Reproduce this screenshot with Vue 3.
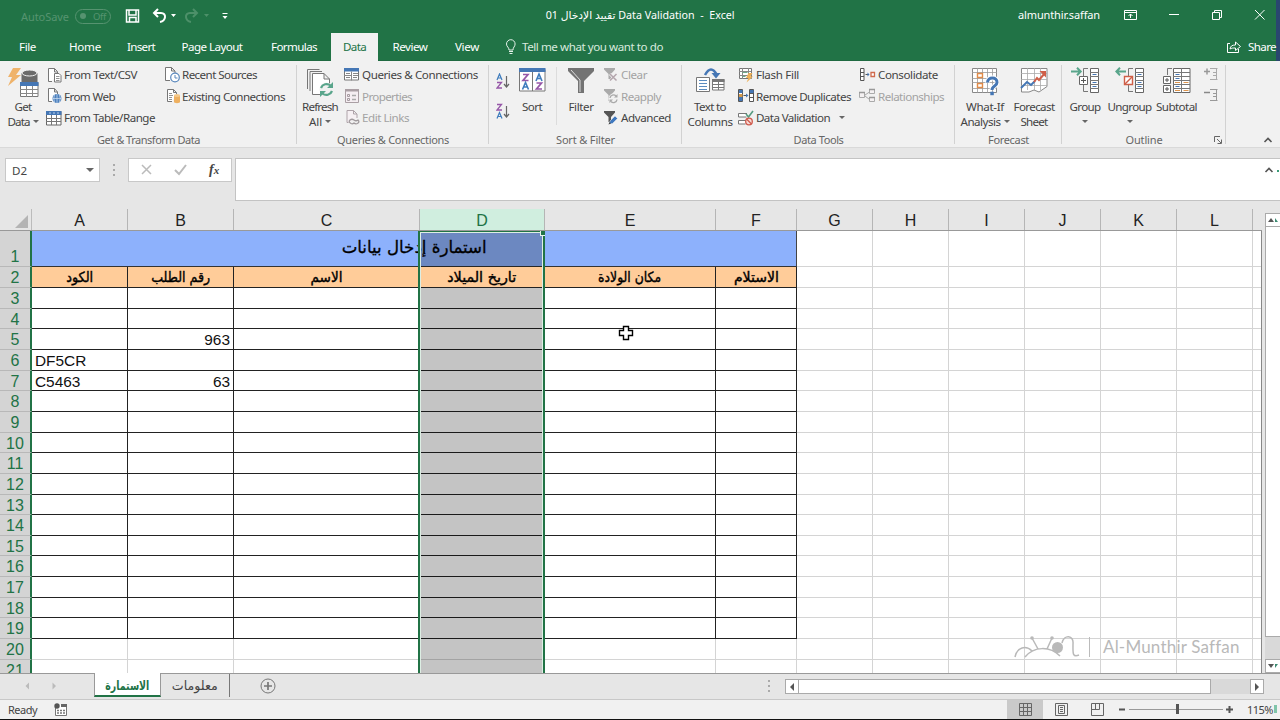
<script setup>
import { h } from 'vue'

const icons = {
  getData: [32, 32, '<path d="M15 6v18c0 3 16 3 16 0V6z" fill="#6b6b6b" transform="translate(-0.500 0)"/><ellipse cx="22.500" cy="6" rx="7.500" ry="3" fill="#6b6b6b" stroke="#f1f1f1"/><path d="M6 1h8l-5 7h5L1 19l4-9H1z" fill="#efb36b"/><path d="M13.500 15.500h17.500v14H13.500z" fill="#fff" stroke="#777"/><path d="M13 15h18.500v4H13z" fill="#4577b5"/><path d="M13 22.500h18M13 26.500h18M19.500 19v11M25.500 19v11" stroke="#888"/>'],
  textCsv: [16, 16, '<path d="M6 14.500H2.500V1.500h6l3 3V6M8.500 1.500v3.500h3" fill="#fff" stroke="#777"/><path d="M8.500 6.500h4.500l2 2v6.500H8.500z" fill="#fff" stroke="#777"/><path d="M10 9.500h3.500M10 11.500h3.500M10 13.500h3.500" stroke="#777" stroke-width=".8"/>'],
  web: [16, 16, '<path d="M6 13.500H2.500V.5h6l3 3.500V6M8.500 .5v3.500h3" fill="#fff" stroke="#777"/><circle cx="11" cy="10.500" r="4.500" fill="#4c80bd"/><path d="M6.500 10.500h9M11 6v9M8.500 7q-1.500 3.500 0 7M13.500 7q1.500 3.500 0 7" stroke="#d3e3f5" fill="none" stroke-width=".7"/>'],
  table: [16, 16, '<path d="M.5 1.500h14.500v13.500H.5z" fill="#fff" stroke="#666"/><path d="M0 1h15.500v4H0z" fill="#4577b5"/><path d="M0 8.500h15M0 11.500h15M5.500 5v10M10.500 5v10" stroke="#777"/><path d="M3 3h2M7 3h2M11 3h2" stroke="#b9d0ea"/>'],
  recent: [16, 16, '<path d="M6 13.500H1.500V.5h6l3.500 3.500V6M7.500 .5v3.500h3.500" fill="#fff" stroke="#777"/><circle cx="11" cy="10.500" r="4.300" fill="#fff" stroke="#5a88bd" stroke-width="1.200"/><path d="M11 8v3h2.500" fill="none" stroke="#5a88bd"/>'],
  existing: [16, 16, '<path d="M8 13.500H3.500V1.500h6l3 3V6M9.500 1.500v3h3" fill="#fff" stroke="#777"/><path d="M5 5.500h3M5 7.500h4M5 9.500h3M5 11.500h3" stroke="#777" stroke-width=".8"/><path d="M10 8v6c0 1.500 6 1.500 6 0V8z" fill="#eeb060"/><ellipse cx="13" cy="7.500" rx="3" ry="1.500" fill="#f4c788"/>'],
  refresh: [30, 32, '<path d="M2.500 22V2.500h12M5 24V4.500h12" fill="none" stroke="#777"/><path d="M7.500 27.500V6.500h11.500l5.500 5.500v15.500zM19 6.500v5.500h5.500" fill="#fff" stroke="#777"/><circle cx="21.500" cy="22.500" r="7" fill="#f1f1f1"/><path d="M16 21a6 6 0 0 1 9.500-2.500M27 24a6 6 0 0 1-9.500 2.500" fill="none" stroke="#59a58b" stroke-width="2.200"/><path d="M28 15v6h-6zM15 30v-6h6z" fill="#59a58b"/>'],
  queries: [16, 16, '<path d="M.5 1.500h14v11.500H.5z" fill="#fff" stroke="#777"/><path d="M0 1h15v3.500H0z" fill="#4577b5"/><path d="M0 8.500h7M7.500 4.500v9M9 6.500h5M9 8.500h5M9 10.500h4M2 6.500h4M2 10.500h4" stroke="#888"/>'],
  props: [16, 16, '<path d="M1.500 1.500h13v13h-13z" fill="#f5eef2" stroke="#aa9fa4"/><path d="M1 1h14v2.500H1z" fill="#aa9fa4"/><path d="M3.500 6.500h2v2h-2zM3.500 10.500h2v2h-2z" fill="none" stroke="#a59ba0"/><path d="M8 7.500h4M8 11.500h4" stroke="#aaa" stroke-width="1.300"/>'],
  links: [16, 16, '<path d="M4.500 12.500H3V.5h6.500l3.500 3.500V8M9.500 .5v3.500h3.500" fill="#f6f0f3" stroke="#aea3a9"/><path d="M7 13.500q-3-1.500-1-3.500 2-1.500 4 0t4 0q2 2-.5 3.500-2 .8-3.500-.500-1.500 1.300-3 .5" fill="none" stroke="#a09a9d" stroke-width="1.300"/>'],
  sort: [28, 26, '<path d="M1.500 2.500h25.500v21.500H1.500z" fill="#fff" stroke="#777"/><path d="M1 1h26.500v4H1z" fill="#4577b5"/><path d="M14.500 5v19" stroke="#777"/><path d="M5 7.500h5l-5 6h5.500M18.500 16h5l-5 6h5.500" fill="none" stroke="#9657a8" stroke-width="1.700"/><path d="M4.500 22.500l3-7 3 7M5.500 20h4M18 14l3-7 3 7M19 11.500h4" fill="none" stroke="#3e7cbd" stroke-width="1.600"/>'],
  az: [14, 17, '<path d="M1 7l2.500-6L6 7M2 5h3" fill="none" stroke="#3e7cbd" stroke-width="1.200"/><path d="M1 9.500h4.500L1 15h5" fill="none" stroke="#9657a8" stroke-width="1.300"/><path d="M10.500 3v11M8 11l2.500 3 2.500-3" fill="none" stroke="#666" stroke-width="1.200"/>'],
  za: [14, 17, '<path d="M1 1.500h4.500L1 7h5" fill="none" stroke="#9657a8" stroke-width="1.300"/><path d="M1 15.500l2.500-6 2.500 6M2 13.500h3" fill="none" stroke="#3e7cbd" stroke-width="1.200"/><path d="M10.500 3v11M8 11l2.500 3 2.500-3" fill="none" stroke="#666" stroke-width="1.200"/>'],
  filter: [28, 28, '<path d="M1 1h26v3L17 14v12h-6V14L1 4z" fill="#737373"/><path d="M4 3l9 10v12" fill="none" stroke="#ddd"/>'],
  clear: [16, 16, '<path d="M1 1h11v1.500L8 7v5H5.500V7L1 2.500z" fill="#aaa"/><path d="M7 7l7 7M14 7l-7 7" stroke="#f1f1f1" stroke-width="3"/><path d="M7 7l6.500 6.500M13.500 7L7 13.500" stroke="#b3a5ac" stroke-width="1.500"/>'],
  reapply: [16, 16, '<path d="M1 1h11v1.500L8 7v6H5.500V7L1 2.500z" fill="#aaa"/><circle cx="10.500" cy="10.500" r="5" fill="#f1f1f1"/><path d="M7 10a3.500 3.500 0 0 1 6-2M14 11.500a3.500 3.500 0 0 1-6 2" fill="none" stroke="#aaa" stroke-width="1.400"/><path d="M14.500 6v3.500H11zM6.500 15v-3.500H10z" fill="#aaa"/>'],
  advanced: [16, 16, '<path d="M1 1h11v1.500L8 7v5H5.500V7L1 2.500z" fill="#555"/><path d="M6 14l1-3 5-5 2.500 2.500-5 5z" fill="#3f78bf" stroke="#f1f1f1" stroke-width=".5"/><path d="M5.500 14.500l1-2.500 1.500 1.500z" fill="#444"/>'],
  textCols: [30, 28, '<path d="M1.500 10.500h13v14h-13z" fill="#fff" stroke="#777"/><path d="M4 13.500h8M4 16.500h8M4 19.500h8M4 22.500h8" stroke="#5b8cc0"/><path d="M17.500 12.500h11.500v10.500H17.500z" fill="#fff" stroke="#777"/><path d="M17 12h12.500v3H17z" fill="#777"/><path d="M17 17.500h12M17 20.500h12M23.500 12v11" stroke="#777"/><path d="M10 8q6-11 12 0" fill="none" stroke="#4577b5" stroke-width="2.500"/><path d="M16.500 6h9L21 11.500z" fill="#4577b5"/>'],
  flash: [16, 16, '<path d="M1.500 1.500h12v10h-12z" fill="#fff" stroke="#777"/><path d="M1 4.500h12M1 8.500h12M4.500 1v11M10.500 1v11" stroke="#888"/><path d="M4.500 5.500h5M4.500 9.500h3" stroke="#6daa8b"/><path d="M10.500 6h4l-2 3.500h2.500L8.500 15.500l2-4.500H8z" fill="#edb057"/>'],
  removeDup: [16, 16, '<path d="M.5 1.500h4v12h-4zM11.500 1.500h4v12h-4z" fill="#fff" stroke="#555"/><path d="M1 2h3.500v3H1zM12 2h3.500v3H12zM1 9h3.500v4H1z" fill="#4577b5"/><path d="M1 6h3.500v3H1z" fill="#d59a4d"/><path d="M12 5.500h3.500M12 9.500h3.500M5.500 7.500h4" stroke="#555"/><path d="M8 5.500v4l2.500-2z" fill="#4577b5"/>'],
  validation: [16, 16, '<path d="M9 3.500H.5v3.500h8M8 10.500H.5v3.500h7" fill="#fff" stroke="#777"/><path d="M8 4l2.500 3L15 1" fill="none" stroke="#579c80" stroke-width="1.600"/><circle cx="11" cy="11.500" r="3.300" fill="#f7dcd8" stroke="#cf5a4c" stroke-width="1.300"/><path d="M8.500 9l5 5" stroke="#cf5a4c" stroke-width="1.300"/>'],
  consolidate: [17, 16, '<path d="M1.500 1.500h3.500v12h-3.500z" fill="#fff" stroke="#555"/><path d="M1 5.500h4M1 9.500h4M6.500 7.500h3" stroke="#555"/><path d="M8.500 5.500v4l2-2z" fill="#4577b5"/><path d="M12 5.500h3.500v4H12z" fill="#fff" stroke="#cf6a4c" stroke-width="1.300"/>'],
  relations: [17, 16, '<path d="M.5 4.500h5v5h-5zM10.500 1.500h5v4h-5zM10.500 9.500h5v4h-5z" fill="#f4f1f2" stroke="#aaa"/><path d="M0 4.500h6M10 1.500h6M10 9.500h6" stroke="#999" stroke-width="1.500"/><path d="M6 7l4.500-3M6 8l4.500 3.500" stroke="#aaa"/>'],
  whatif: [28, 30, '<path d="M1.500 1.500h24v24h-24z" fill="#fff" stroke="#888"/><path d="M1 5.500h25M1 11.500h25M1 15.500h25M1 21.500h25M6.500 1v25M11.500 1v25M16.500 1v25M21.500 1v25" stroke="#999" stroke-width=".8"/><path d="M6.500 6.500h5v4h-5zM6.500 16.500h5v4h-5z" fill="#fff" stroke="#e08b48" stroke-width="1.400"/><path d="M16.500 15.500c0-6 10-6 9.500 0 0 4-5 3-5 7.500" fill="none" stroke="#fff" stroke-width="5"/><path d="M16.500 15.500c0-6 10-6 9.500 0 0 4-5 3-5 7.500" fill="none" stroke="#4577b5" stroke-width="3"/><path d="M19.300 24.700h3.500v3.500h-3.500z" fill="#4577b5"/>'],
  forecast: [28, 28, '<path d="M1.500 1.500h25.500v18l-8 5.500-5-2-5 2H1.500z" fill="#fff" stroke="#888"/><path d="M1 6.500h26M1 12.500h26M1 18.500h26M7.500 1v22M14.500 1v22M20.500 1v22" stroke="#aaa" stroke-width=".8"/><path d="M1 21l6-6 4 3 4-4" fill="none" stroke="#4577b5" stroke-width="2"/><path d="M14 15l3-4 2 2 6-7" fill="none" stroke="#cf5f48" stroke-width="2"/><path d="M19.500 4H26v6.500z" fill="#cf5f48"/>'],
  group: [30, 28, '<path d="M20.500 1.500h8v24h-8z" fill="#fff" stroke="#666"/><path d="M20 5.500h9M20 9.500h9M20 13.500h9M20 17.500h9M20 21.500h9" stroke="#777"/><path d="M22.500 7.500h4M22.500 15.500h4M22.500 19.500h4" stroke="#4577b5"/><path d="M18 1.500h-4.500V24.500H18" fill="none" stroke="#777"/><path d="M9.500 9.500h8v8h-8z" fill="#fff" stroke="#666"/><path d="M11 13.500h5M13.500 11v5" stroke="#555"/><path d="M1 4.500h9M7 .8l3.700 3.700L7 8.200" fill="none" stroke="#59a58b" stroke-width="2"/>'],
  ungroup: [30, 28, '<path d="M20.500 1.500h8v24h-8z" fill="#fff" stroke="#666"/><path d="M20 5.500h9M20 9.500h9M20 13.500h9M20 17.500h9M20 21.500h9" stroke="#777"/><path d="M22.500 7.500h4M22.500 15.500h4M22.500 19.500h4" stroke="#4577b5"/><path d="M18 1.500h-4.500V24.500H18" fill="none" stroke="#777"/><path d="M9.500 9.500h8v8h-8z" fill="#fff" stroke="#cf5f48" stroke-width="1.400"/><path d="M10 17l7-7" stroke="#cf5f48" stroke-width="1.400"/><path d="M11 4.500H2M5 .8L1.300 4.500 5 8.200" fill="none" stroke="#59a58b" stroke-width="2"/>'],
  subtotal: [30, 28, '<path d="M11.500 1.500h16.500v24H11.500z" fill="#fff" stroke="#666"/><path d="M11 5.500h17M11 9.500h17M11 13.500h17M11 17.500h17M11 21.500h17M19.500 1v25" stroke="#777"/><path d="M13.500 7.500h4M13.500 11.500h4M13.500 19.500h4" stroke="#4577b5"/><path d="M13 15.500h5M21.500 15.500h5M13 23.500h5M21.500 23.500h5" stroke="#df954d"/><path d="M10 1.500H5.500V8" fill="none" stroke="#777"/><path d="M1.500 9.500h7v7h-7zM1.500 18.500h7v7h-7z" fill="#fff" stroke="#666"/><path d="M3 13h4M5 11v4M3 22h4M5 20v4" stroke="#555"/>'],
  show: [14, 14, '<path d="M0 4.500h6M3 1.500v6" stroke="#999" stroke-width="1.500"/><path d="M6 1.500h7.500M9 5.500h4M9 8.500h4M6 12.500h7.500M12.500 1v12" stroke="#aaa" fill="none"/>'],
  hide: [14, 14, '<path d="M0 4.500h6" stroke="#888" stroke-width="1.500"/><path d="M6 1.500h7.500M9 5.500h4M9 8.500h4M6 12.500h7.500M12.500 1v12" stroke="#999" fill="none"/>'],
}
const Icon = (p) => {
  const [w, hh, body] = icons[p.name]
  return h('svg', { width: w, height: hh, viewBox: `0 0 ${w} ${hh}`, innerHTML: body })
}
Icon.props = ['name']

// Sets a label to a given width: tracking for Latin text, horizontal scale for joined scripts.
const vFit = {
  mounted(el, { value }) {
    if (!value) return
    const natural = el.getBoundingClientRect().width
    const text = el.textContent
    if (/[\u0600-\u06ff]/.test(text)) el.style.transform = `scaleX(${value / natural})`
    else el.style.letterSpacing = `${(value - natural) / text.length}px`
  },
}

const tabs = [['File', 17, 55], ['Home', 32, 60], ['Insert', 28, 52], ['Page Layout', 61, 90], ['Formulas', 46, 74], ['Data', 23, 47, true], ['Review', 35, 64], ['View', 24, 50]]

const groups = [
  { w: 297, label: ['Get & Transform Data', 103], parts: [
    { big: 'getData', w: 46, lines: [['Get', 17], ['Data', 22, true]] },
    { list: [['textCsv', 'From Text/CSV', 73], ['web', 'From Web', 51], ['table', 'From Table/Range', 91]], w: 118, pad: 0 },
    { list: [['recent', 'Recent Sources', 75], ['existing', 'Existing Connections', 103]], w: 132, pad: 0 }] },
  { w: 192, label: ['Queries & Connections', 112], parts: [
    { big: 'refresh', w: 46, lines: [['Refresh', 36], ['All', 13, true]] },
    { list: [['queries', 'Queries & Connections', 116], ['props', 'Properties', 50, 1], ['links', 'Edit Links', 47, 1]], w: 145, pad: 1 }] },
  { w: 193, label: ['Sort & Filter', 59], parts: [
    { stack: ['az', 'za'], w: 28, left: 7 },
    { big: 'sort', w: 30, lines: [['Sort', 20]] },
    { rule: true, w: 20 },
    { big: 'filter', w: 28, lines: [['Filter', 25]] },
    { list: [['clear', 'Clear', 26, 1], ['reapply', 'Reapply', 40, 1], ['advanced', 'Advanced', 50]], w: 76, pad: 8 }] },
  { w: 273, label: ['Data Tools', 50], parts: [
    { big: 'textCols', w: 56, lines: [['Text to', 32], ['Columns', 45]] },
    { list: [['flash', 'Flash Fill', 43], ['removeDup', 'Remove Duplicates', 95], ['validation', 'Data Validation', 74, 0, true]], w: 121, pad: 0 },
    { list: [['consolidate', 'Consolidate', 60], ['relations', 'Relationships', 66, 1]], w: 94, pad: 0 }] },
  { w: 107, label: ['Forecast', 41], parts: [
    { big: 'whatif', w: 60, lines: [['What-If', 38], ['Analysis', 40, true]] },
    { big: 'forecast', w: 38, lines: [['Forecast', 41], ['Sheet', 27]] }] },
  { w: 164, label: ['Outline', 37], launcher: true, parts: [
    { big: 'group', w: 46, lines: [['Group', 31], ['', 0, true]] },
    { big: 'ungroup', w: 43, lines: [['Ungroup', 44], ['', 0, true]] },
    { big: 'subtotal', w: 51, lines: [['Subtotal', 41]] },
    { stack: ['show', 'hide'], w: 22, left: 2, tight: true }] },
]

const columns = [['A', 96], ['B', 106], ['C', 186], ['D', 125], ['E', 171], ['F', 81], ['G', 76], ['H', 76], ['I', 76], ['J', 76], ['K', 76], ['L', 76], ['', 9]]
const rowLine = (n) => (n === 1 ? 266 : Math.round(287 + (n - 2) * 20.65))
const rows = Array.from({ length: 21 }, (_, i) => ({ n: i + 1, h: i ? rowLine(i + 1) - rowLine(i) : 36 }))
const headings = [['الكود', 27], ['رقم الطلب', 59], ['الاسم', 32], ['تاريخ الميلاد', 69], ['مكان الولادة', 63], ['الاستلام', 45]]
const values = { '5B': '963', '6A': 'DF5CR', '7A': 'C5463', '7B': '63' }
</script>

<template>
  <div class="window">
    <header class="top">
      <div class="titlebar">
        <span class="autosave"><span v-fit="48">AutoSave</span></span>
        <span class="switch"><i></i><span v-fit="13">Off</span></span>
        <svg class="quick" width="110" height="18" viewBox="0 0 110 18">
          <path d="M1.500 3h12v12h-12zM4 3v5h7v-5M4.500 14.500v-4h6.500v4" fill="none" stroke="#fff" stroke-width="1.500" />
          <path d="M33 2l-4 4 4 4M29 6h7c6 0 5 8-1 9" fill="none" stroke="#fff" stroke-width="2" />
          <path d="M46 7h5l-2.500 3zM97.500 9h5l-2.500 3z" fill="#fff" /><path d="M97.500 6.500h5" stroke="#fff" />
          <path d="M68 2l4 4-4 4M72 6h-7c-6 0-5 8 1 9" fill="none" stroke="#4d9069" stroke-width="2" />
          <path d="M79 7h5l-2.500 3z" fill="#4d9069" />
        </svg>
        <div class="doc"><span v-fit="189">تقييد الإدخال 01 Data Validation&nbsp; -&nbsp; Excel</span></div>
        <div class="user"><span v-fit="82">almunthir.saffan</span></div>
        <svg class="controls" width="150" height="16" viewBox="0 0 150 16" fill="none" stroke="#fff">
          <path d="M.5 3.500h12v9H.5zM.5 5.500h12M6.500 11V7M4.500 9l2-2 2 2" />
          <path d="M45 7.500h10M88.500 5.500h7v7h-7zM90.500 5.500v-2h7v7H95.500M131 3l9.500 9.500M140.500 3L131 12.500" />
        </svg>
      </div>
      <nav class="tabs">
        <a v-for="t in tabs" :key="t[0]" :class="{ active: t[3] }" :style="{ width: t[2] + 'px' }"><span v-fit="t[1]">{{ t[0] }}</span></a>
        <div class="tell">
          <svg width="12" height="16" viewBox="0 0 12 16" fill="none" stroke="#e4f1e9"><path d="M4 11C4 8 1.500 8 1.500 5a4.300 4.300 0 0 1 8.600 0C10 8 8 8 8 11zM4 12.500h4M4.500 14.500h3" /></svg>
          <span v-fit="141">Tell me what you want to do</span>
        </div>
        <div class="share">
          <svg width="16" height="14" viewBox="0 0 16 14" fill="none" stroke="#fff"><path d="M4 3.500H1.500v9h11V9M4 9c.5-3 2-4 5.500-4V2l5 4.500-5 4V8C7 8 5.500 8 4 9z" /></svg>
          <span v-fit="28">Share</span>
        </div>
      </nav>
      <div class="edge"></div>
    </header>

    <section class="ribbon">
      <div v-for="g in groups" :key="g.label[0]" class="group" :style="{ width: g.w + 'px' }">
        <div class="parts">
          <div v-for="(p, i) in g.parts" :key="i" class="part" :style="{ width: p.w + 'px' }">
            <div v-if="p.big" class="big">
              <div class="bigicon"><Icon :name="p.big" /></div>
              <div v-for="(l, k) in p.lines" :key="k" class="line"><span v-if="l[0]" v-fit="l[1]">{{ l[0] }}</span><i v-if="l[2]" class="caret"></i></div>
            </div>
            <div v-else-if="p.list" class="list" :style="{ paddingLeft: p.pad + 'px' }">
              <div v-for="s in p.list" :key="s[1]" class="small" :class="{ dim: s[3] }">
                <Icon :name="s[0]" /><span v-fit="s[2]">{{ s[1] }}</span><i v-if="s[4]" class="caret far"></i>
              </div>
            </div>
            <div v-else-if="p.stack" class="stack" :class="{ tight: p.tight }" :style="{ paddingLeft: p.left + 'px' }"><Icon v-for="s in p.stack" :key="s" :name="s" /></div>
            <div v-else class="rule"></div>
          </div>
        </div>
        <div class="glabel"><span v-fit="g.label[1]">{{ g.label[0] }}</span>
          <svg v-if="g.launcher" class="launcher" width="8" height="8" viewBox="0 0 8 8" fill="none" stroke="#666"><path d="M.5 6V.5H6M3 3l4 4M7.500 3.500v4h-4" /></svg>
        </div>
      </div>
      <svg class="collapse" width="12" height="8" viewBox="0 0 12 8"><path d="M1.500 6L5 2.500 8.500 6" fill="none" stroke="#555" stroke-width="1.600" /></svg>
    </section>

    <section class="formula">
      <div class="namebox"><span v-fit="15">D2</span><i class="caret"></i></div>
      <div class="dots"><i></i><i></i><i></i></div>
      <div class="fx">
        <svg width="50" height="16" viewBox="0 0 50 16" fill="none" stroke="#bbb" stroke-width="1.500"><path d="M3 3l9 9M12 3l-9 9" /><path d="M36 8l4 4 7-9" stroke-width="2" /></svg>
        <span class="fsym">f<small>x</small></span>
      </div>
      <div class="input"><svg width="12" height="8" viewBox="0 0 12 8"><path d="M1.500 6L5 2.500 8.500 6" fill="none" stroke="#555" stroke-width="1.600" /></svg><i></i></div>
    </section>

    <section class="sheet">
      <div class="grid">
        <div class="colheads">
          <div class="corner"><svg width="13" height="13" viewBox="0 0 13 13"><path d="M13 0v13H0z" fill="#b4b4b4" /></svg></div>
          <div v-for="c in columns" :key="c[0]" class="colhead" :class="{ sel: c[0] === 'D', last: !c[0] }" :style="{ width: c[1] + 'px' }">{{ c[0] }}</div>
        </div>
        <div class="rows">
          <div v-for="r in rows" :key="r.n" class="row" :style="{ height: r.h + 'px' }">
            <div class="rowhead" :class="{ tall: r.n === 1 }">{{ r.n }}</div>
            <div v-if="r.n === 1" class="merged"><span v-fit="145">استمارة إدخال بيانات</span></div>
            <template v-for="(c, i) in columns" :key="i">
              <div v-if="r.n > 1 || i > 5" class="cell" :class="{ form: i < 6 && r.n < 20, head: i < 6 && r.n === 2, num: c[0] === 'B', last: !c[0] }" :style="{ width: c[1] + 'px' }">
                <span v-if="r.n === 2 && i < 6" v-fit="headings[i][1]">{{ headings[i][0] }}</span>
                <template v-else>{{ values[r.n + c[0]] }}</template>
              </div>
            </template>
          </div>
          <div class="selection"><div class="shade first"></div><div class="shade rest"></div><i class="handle"></i></div>
          <svg class="cursor" width="16" height="16" viewBox="0 0 16 16"><path d="M5.500 1.500h5v4h4v5h-4v4h-5v-4h-4v-5h4z" fill="#fff" stroke="#000" stroke-width="1.400" /></svg>
          <div class="mark">
            <svg width="66" height="24" viewBox="0 0 66 24" fill="none" stroke="#b9b9b9" stroke-width="1.500"><path d="M1 22c2-10 11-12 17-6M11 22c9-11 25-11 35-1M24 14L18 3M33 14L38 3M48 8c2-9 12-8 11 1 0 8-1 14 6 11" /><circle cx="18" cy="3" r="1.800" fill="#b9b9b9" stroke="none" /><circle cx="38" cy="3" r="1.800" fill="#b9b9b9" stroke="none" /><circle cx="43.500" cy="12.500" r="5.500" fill="#b9b9b9" stroke="none" /></svg>
            <i></i><span v-fit="136">Al-Munthir Saffan</span>
          </div>
        </div>
      </div>
      <div class="vscroll">
        <div class="vbtn"><svg width="15" height="8" viewBox="0 0 15 8"><path d="M2 6l3-4 3 4z" fill="#555" /><path d="M9 2l3 4H9z" fill="#3c8b72" /></svg></div>
        <div class="vthumb"></div><div class="vtrack"></div>
        <div class="vbtn"><svg width="15" height="8" viewBox="0 0 15 8"><path d="M2 2l3 4 3-4z" fill="#555" /><path d="M9 2v4l3-4z" fill="#3c8b72" /></svg></div>
      </div>
    </section>

    <section class="sheettabs">
      <svg class="arrows" width="94" height="24" viewBox="0 0 94 24" fill="#bbb"><path d="M29 8.500v7L25.500 12zM52.500 8.500v7L56 12z" /></svg>
      <div class="stab on"><span v-fit="44">الاستمارة</span></div>
      <div class="stab"><span v-fit="46">معلومات</span></div>
      <svg class="plus" width="16" height="16" viewBox="0 0 16 16" fill="none" stroke="#777"><circle cx="8" cy="8" r="7" /><path d="M4 8h8M8 4v8" stroke-width="1.700" /></svg>
      <div class="dots"><i></i><i></i><i></i></div>
      <div class="hscroll">
        <div class="hbtn"><svg width="6" height="8" viewBox="0 0 6 8"><path d="M5 0v8L1 4z" fill="#555" /></svg></div>
        <div class="hthumb"></div><div class="htrack"></div>
        <div class="hbtn"><svg width="6" height="8" viewBox="0 0 6 8"><path d="M1 0v8l4-4z" fill="#555" /></svg></div>
      </div>
    </section>

    <footer class="status">
      <span v-fit="29">Ready</span>
      <svg class="macro" width="13" height="13" viewBox="0 0 13 13"><path d="M1.500 5v7.500h11v-11H7" fill="#fff" stroke="#777" /><circle cx="3" cy="3" r="2.700" fill="#555" /><path d="M7 1h6v3H7z" fill="#666" /><path d="M3 7.500h9M3 10h9" stroke="#777" stroke-width="1.500" stroke-dasharray="2 1" /></svg>
      <div class="views">
        <div class="view on"><svg width="13" height="13" viewBox="0 0 13 13" fill="none" stroke="#666"><path d="M.5.5h12v12H.5zM.5 4.500h12M.5 8.500h12M4.500.5v12M8.500.5v12" /></svg></div>
        <div class="view"><svg width="13" height="13" viewBox="0 0 13 13" fill="none" stroke="#666"><path d="M.5.5h12v12H.5zM3.500 2.500h6v8h-6zM5 4.500h3M5 6.500h3M5 8.500h3" /></svg></div>
        <div class="view"><svg width="13" height="13" viewBox="0 0 13 13" fill="none" stroke="#666"><path d="M.5.5h12v12H.5zM4.500.5v6M8.500.5v6H.5" /></svg></div>
      </div>
      <svg class="zoom" width="118" height="14" viewBox="0 0 118 14"><path d="M1 7.500h6M108 7.500h7M111.500 4v7" stroke="#555" stroke-width="2" /><path d="M11 7.500h94" stroke="#999" /><path d="M58 2h3v10h-3z" fill="#555" /></svg>
      <span class="pct" v-fit="26">115%</span><i class="tick"></i>
    </footer>
  </div>
</template>

<style>
body { margin: 0; overflow: hidden; }
</style>
<style scoped>
* { box-sizing: border-box; }
svg { display: block; flex: none; }
.window { width: 1280px; height: 720px; overflow: hidden; display: flex; flex-direction: column; background: #e6e6e6; border-bottom: 1px solid #111; color: #444; font: 11.600px/15px "Noto Sans", "Open Sans", "DejaVu Sans", sans-serif; white-space: nowrap; }
span { display: inline-block; flex: none; }
.top { height: 61px; background: #217346; color: #fff; position: relative; flex: none; border-bottom: 1px solid #1f6a41; }
.edge { position: absolute; right: 0; top: 0; width: 4px; height: 61px; background: #29466f; }
.titlebar { height: 31px; display: flex; align-items: center; font-size: 11px; }
.autosave { margin-left: 21px; width: 54px; color: #569370; padding-top: 2px; }
.switch { width: 36px; height: 15px; border: 1.500px solid #569370; border-radius: 8px; display: flex; align-items: center; padding-left: 4px; gap: 7px; color: #569370; font-size: 9.500px; margin-top: 1px; }
.switch i { width: 6px; height: 6px; border-radius: 50%; background: #569370; }
.quick { margin-left: 14px; }
.doc { width: 190px; margin-left: 310px; display: flex; justify-content: center; font-size: 11px; margin-top: -2px; }
.user { margin-left: 283px; width: 106px; margin-top: -2px; }
.controls { margin-top: -1px; }
.tabs { height: 30px; display: flex; }
.tabs a { display: flex; align-items: center; justify-content: center; margin-top: 2px; padding-bottom: 1px; }
.tabs a.active { background: #f1f1f1; color: #217346; }
.tell { display: flex; align-items: center; gap: 5px; margin-left: 13px; padding-top: 1px; color: #d7eade; }
.share { display: flex; align-items: center; gap: 6px; margin-left: auto; padding: 1px 4px 0 0; position: relative; z-index: 1; }
.ribbon { height: 87px; background: #f1f1f1; border-bottom: 1px solid #d9d9d9; display: flex; flex: none; }
.group { height: 86px; position: relative; flex: none; }
.group::after { content: ""; position: absolute; right: 0; top: 4px; width: 1px; height: 79px; background: #d2d2d2; }
.parts { display: flex; height: 70px; padding-top: 3px; }
.part { flex: none; }
.big { display: flex; flex-direction: column; align-items: center; }
.bigicon { height: 35px; display: flex; align-items: flex-start; padding-top: 3px; }
.line { height: 15px; display: flex; align-items: center; gap: 3px; }
.caret { border: 3px solid transparent; border-top-color: #666; border-bottom: 0; width: 0; height: 0; flex: none; }
.far { margin-left: 7px; }
.small { height: 21.600px; display: flex; align-items: center; gap: 2px; }
.dim { color: #a3a3a3; }
.stack { display: flex; flex-direction: column; gap: 13px; padding-top: 9px; }
.stack.tight { gap: 7px; padding-top: 3px; }
.rule { width: 1px; height: 58px; background: #dcdcdc; margin: 3px 0 0 9px; }
.glabel { height: 16px; display: flex; align-items: center; justify-content: center; color: #666; font-size: 11px; }
.launcher { position: absolute; right: 4px; top: 75px; }
.collapse { margin: 75px 0 0 37px; }
.formula { height: 61px; padding-top: 10px; display: flex; flex: none; }
.namebox { margin-left: 5px; width: 95px; height: 24px; background: #fff; border: 1px solid #c8c8c8; display: flex; align-items: center; justify-content: space-between; padding: 0 5px 0 6px; }
.formula .caret { border-width: 4px; border-bottom: 0; }
.dots { display: flex; flex-direction: column; gap: 3px; }
.dots i { width: 2px; height: 2px; background: #aaa; }
.formula .dots { margin: 6px 13px 0 13px; }
.fx { width: 104px; height: 24px; background: #fff; border: 1px solid #c8c8c8; display: flex; align-items: center; padding-left: 10px; }
.fsym { font: italic bold 14px/16px "Liberation Serif", serif; margin-left: 20px; }
.fsym small { font-size: 11px; }
.input { width: 1045px; margin-left: 3px; height: 43px; background: #fff; border: 1px solid #c3c3c3; border-right: 0; flex: none; padding: 7px 0 0 1028px; display: flex; gap: 1px; }
.input i { width: 2px; height: 2px; background: #3c9c78; margin-top: 4px; flex: none; }
.sheet { height: 464px; display: flex; flex: none; }
.grid { width: 1262px; height: 464px; overflow: hidden; flex: none; font-family: "Liberation Sans", "DejaVu Sans", sans-serif; }
.colheads { height: 22px; display: flex; border-bottom: 1px solid #999; }
.corner { width: 32px; height: 21px; padding: 6px 0 0 15px; border-right: 1px solid #bbb; flex: none; }
.colhead { height: 21px; border-right: 1px solid #b5b5b5; font-size: 16px; line-height: 23px; text-align: center; color: #222; flex: none; }
.colhead.sel { background: #d0eedf; color: #217346; }
.rows { position: relative; height: 442px; overflow: hidden; background: #fff; border-right: 1px solid #888; }
.row { display: flex; }
.rowhead { width: 32px; border-right: 2px solid #217346; border-bottom: 1px solid #b8b8b8; background: #d4d4d4; color: #217346; font-size: 16px; line-height: 22px; text-align: center; flex: none; overflow: hidden; }
.rowhead.tall { padding-top: 15px; }
.merged { width: 765px; background: #8db1fc; border-right: 1px solid #444; border-bottom: 1px solid #333; display: flex; align-items: center; justify-content: center; color: #000; font: 17px/24px "DejaVu Sans", sans-serif; -webkit-text-stroke: .3px #000; flex: none; padding-bottom: 4px; }
.cell { border-right: 1px solid #d4d4d4; border-bottom: 1px solid #d4d4d4; padding: 0 3px; font-size: 15.400px; line-height: 21px; color: #111; flex: none; }
.cell.form { border-color: #222; }
.cell.head { background: #ffcc99; display: flex; align-items: center; justify-content: center; color: #000; font: 14px/18px "DejaVu Sans", sans-serif; -webkit-text-stroke: .4px #000; padding: 0; }
.num { text-align: right; }
.cell.last, .colhead.last { border-right: 0; }
.selection { position: absolute; left: 418px; top: -1px; width: 127px; height: 460px; border: 2px solid #217346; box-shadow: inset 0 0 0 1px #ddeee4; }
.shade { position: absolute; left: 1px; right: 1px; background: rgba(0, 0, 0, .23); }
.shade.first { top: 1px; height: 34px; }
.shade.rest { top: 56px; bottom: 0; }
.handle { position: absolute; right: -2px; top: -1px; width: 5px; height: 5px; background: #217346; border: 1px solid #e6f3eb; border-width: 0 0 1px 1px; }
.cursor { position: absolute; left: 618px; top: 94px; }
.mark { position: absolute; left: 1014px; top: 404px; display: flex; align-items: center; color: #b9b9b9; font: 17px/24px Lato, sans-serif; }
.mark i { width: 1px; height: 20px; background: #bbb; margin: 0 13px 0 9px; }
.vscroll { margin-left: 3px; width: 15px; padding-top: 4px; display: flex; flex-direction: column; }
.vbtn { height: 14px; background: #fff; border: 1px solid #aaa; border-right: 0; display: flex; align-items: center; flex: none; }
.vthumb { height: 410px; background: #fff; border: 1px solid #aaa; border-width: 0 0 1px 1px; }
.vtrack { height: 22px; background: #d9d9d9; }
.sheettabs { height: 26px; border-top: 1px solid #999; display: flex; flex: none; }
.stab { height: 23px; width: 69px; display: flex; align-items: center; justify-content: center; font: 12.500px/18px "DejaVu Sans", sans-serif; border-right: 1px solid #777; padding-top: 1px; }
.stab.on { width: 67px; margin-top: -1px; height: 24px; background: #fff; color: #217346; font-weight: bold; border: 1px solid #999; border-width: 0 1px; border-bottom: 2px solid #217346; padding-top: 4px; }
.plus { margin: 4px 0 0 30px; }
.sheettabs .dots { margin: 6px 15px 0 492px; }
.hscroll { display: flex; margin-top: 5px; height: 15px; }
.hbtn { width: 14px; height: 15px; background: #fff; border: 1px solid #aaa; display: flex; align-items: center; justify-content: center; }
.hthumb { width: 412px; background: #fff; border: 1px solid #aaa; border-left: 0; }
.htrack { width: 39px; background: #d9d9d9; }
.status { height: 20px; background: #f1f1f1; border-top: 1px solid #c8c8c8; display: flex; align-items: center; padding: 0 0 1px 8px; font-size: 11px; flex: none; }
.macro { margin-left: 17px; }
.views { display: flex; margin-left: 940px; }
.view { width: 36px; height: 19px; display: flex; align-items: center; justify-content: center; }
.view.on { background: #cacaca; }
.zoom { margin-left: 3px; }
.pct { margin-left: 11px; }
.tick { width: 3px; height: 8px; background: #7fc4a9; margin-left: 1px; }
</style>
